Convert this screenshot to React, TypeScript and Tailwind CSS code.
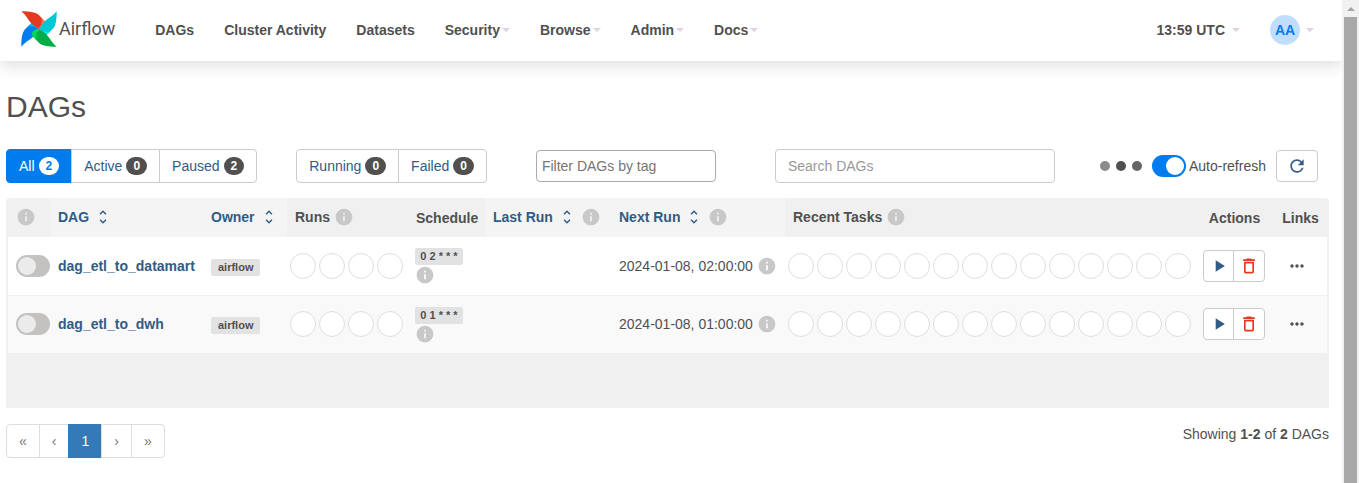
import React from "react";
import {
  MdDeleteOutline,
  MdInfo,
  MdMoreHoriz,
  MdPlayArrow,
  MdRefresh,
  MdUnfoldMore,
} from "react-icons/md";

type NavLink = { label: string; menu?: boolean };

const navLinks: NavLink[] = [
  { label: "DAGs" },
  { label: "Cluster Activity" },
  { label: "Datasets" },
  { label: "Security", menu: true },
  { label: "Browse", menu: true },
  { label: "Admin", menu: true },
  { label: "Docs", menu: true },
];

const dags = [
  { id: "dag_etl_to_datamart", owner: "airflow", schedule: "0 2 * * *", next: "2024-01-08, 02:00:00" },
  { id: "dag_etl_to_dwh", owner: "airflow", schedule: "0 1 * * *", next: "2024-01-08, 01:00:00" },
];

function Pinwheel() {
  const blade = "M0.5 59.5C0.5 45 2 34 8 29L18 19.5C20 19 22 22 24 26C26 29 29 29 30 30.5C25 37 22 42 18 45C13 49 7 52 0.5 59.5Z";
  const fold = "M11 26L18 19.5C21 17.500 25 18 27 21C29 24 30 27 30 30.500C26 27 20 24 11 26Z";
  const blades = [
    { turn: "rotate(0 30 30)", dark: "#017cee", light: "#0cb6ff" },
    { turn: "rotate(90 30 30)", dark: "#e43921", light: "#ff7557" },
    { turn: "rotate(180 30 30)", dark: "#00c7d4", light: "#11e1ee" },
    { turn: "rotate(270 30 30)", dark: "#00ad46", light: "#04d659" },
  ];
  return (
    <svg viewBox="0 0 60 60" className="size-9" aria-hidden="true">
      {blades.map((b) => (
        <g key={b.turn} transform={b.turn}>
          <path d={blade} fill={b.dark} />
          <path d={fold} fill={b.light} />
        </g>
      ))}
    </svg>
  );
}

function Caret() {
  return (
    <svg viewBox="0 0 8 4" className="h-1 w-2" aria-hidden="true">
      <path d="M0 0h8L4 4z" fill="#e2d2e2" />
    </svg>
  );
}

function Info() {
  return <MdInfo className="size-5 shrink-0 text-[#c8c8c8]" aria-hidden="true" />;
}

function CountBadge({ active, children }: { active?: boolean; children: React.ReactNode }) {
  return (
    <span
      className={
        active
          ? "rounded-full bg-white px-[7px] text-xs leading-[18px] font-bold text-[#017cee]"
          : "rounded-full bg-[#51504f] px-[7px] text-xs leading-[18px] font-bold text-white"
      }
    >
      {children}
    </span>
  );
}

function FilterGroup({ items }: { items: { label: string; count: number; active?: boolean }[] }) {
  return (
    <div className="flex">
      {items.map((i) => (
        <a
          key={i.label}
          href="#"
          className={
            i.active
              ? "-ml-px flex h-[34px] items-center gap-1 border border-[#017cee] bg-[#017cee] px-3 text-white first:ml-0 first:rounded-l last:rounded-r"
              : "-ml-px flex h-[34px] items-center gap-1 border border-[#cbcbcb] bg-white px-3 text-[#305c86] first:ml-0 first:rounded-l last:rounded-r"
          }
        >
          {i.label}
          <CountBadge active={i.active}>{i.count}</CountBadge>
        </a>
      ))}
    </div>
  );
}

function Switch({ label, checked }: { label: string; checked?: boolean }) {
  return (
    <input
      type="checkbox"
      role="switch"
      aria-label={label}
      defaultChecked={checked}
      className="block h-[22px] w-[34px] shrink-0 appearance-none rounded-full bg-[#c3c2c0] p-0.5 before:block before:size-[18px] before:rounded-full before:bg-[#ebebeb] checked:bg-[#017cee] checked:before:ml-3 checked:before:bg-white"
    />
  );
}

function Circles({ count }: { count: number }) {
  return (
    <div className="flex gap-[3px]">
      {Array.from({ length: count }, (_, i) => (
        <span key={i} className="size-[26px] shrink-0 rounded-full border border-[#dedede] bg-white" />
      ))}
    </div>
  );
}

function SortHead({ label, info }: { label: string; info?: boolean }) {
  return (
    <th className="bg-[#f4f4f4] px-2 pb-0.5 text-left">
      <div className="flex items-center gap-[5px]">
        <a href="#" className="flex items-center gap-[5px] whitespace-nowrap text-[#305c86]">
          {label}
          <MdUnfoldMore className="size-[18px]" aria-hidden="true" />
        </a>
        {info && <Info />}
      </div>
    </th>
  );
}

function NavBar() {
  return (
    <nav className="flex h-[61px] items-center bg-white pb-px pl-[21px] font-bold shadow-[0_4px_16px_rgba(0,0,0,0.14)]">
      <a href="#" className="flex items-center gap-0.5 pb-[3px]">
        <Pinwheel />
        <span className="font-[Roboto,sans-serif] text-lg font-normal">Airflow</span>
      </a>
      <ul className="ml-10 flex items-center gap-[30px]">
        {navLinks.map((l) => (
          <li key={l.label}>
            <a href="#" className="flex items-center gap-0.5 whitespace-nowrap">
              {l.label}
              {l.menu && <Caret />}
            </a>
          </li>
        ))}
      </ul>
      <div className="mr-7 ml-auto flex items-center gap-[30px]">
        <a href="#" className="flex items-center gap-[7px] whitespace-nowrap">
          13:59 UTC
          <Caret />
        </a>
        <a href="#" className="flex items-center gap-1.5">
          <span className="flex size-[30px] items-center justify-center rounded-full bg-[#c0defb] text-[#017cee]">
            AA
          </span>
          <Caret />
        </a>
      </div>
    </nav>
  );
}

function Toolbar() {
  return (
    <div className="flex items-center">
      <FilterGroup
        items={[
          { label: "All", count: 2, active: true },
          { label: "Active", count: 0 },
          { label: "Paused", count: 2 },
        ]}
      />
      <div className="ml-[39px]">
        <FilterGroup items={[{ label: "Running", count: 0 }, { label: "Failed", count: 0 }]} />
      </div>
      <input
        aria-label="Filter DAGs by tag"
        placeholder="Filter DAGs by tag"
        className="ml-[49px] h-8 w-[180px] rounded border border-[#aaaaaa] bg-white px-[5px] placeholder:text-[#757575]"
      />
      <input
        type="search"
        aria-label="Search DAGs"
        placeholder="Search DAGs"
        className="ml-[59px] h-[34px] w-[280px] rounded border border-[#cccccc] bg-white px-3 placeholder:text-[#999999]"
      />
      <div className="mr-[11px] ml-auto flex items-center">
        <div className="mr-2.5 flex gap-1.5">
          <span className="size-2.5 rounded-full bg-[#8b8b8a]" />
          <span className="size-2.5 rounded-full bg-[#51504f]" />
          <span className="size-2.5 rounded-full bg-[#666564]" />
        </div>
        <label className="mr-2.5 flex items-center gap-[3px] whitespace-nowrap">
          <Switch label="Auto-refresh" checked />
          Auto-refresh
        </label>
        <button
          type="button"
          aria-label="Refresh"
          className="flex h-8 w-[42px] items-center justify-center rounded-sm border border-[#cbcbcb] bg-white text-[#305c86]"
        >
          <MdRefresh className="size-5" />
        </button>
      </div>
    </div>
  );
}

function DagTable() {
  return (
    <div className="mt-[15px] rounded-t-sm border-2 border-t-0 border-[#f0f0f0] bg-[#f0f0f0] pb-[53px]">
      <table className="w-full table-fixed border-collapse">
        <colgroup>
          <col className="w-[42px]" />
          <col className="w-[153px]" />
          <col className="w-[84px]" />
          <col className="w-[121px]" />
          <col className="w-[77px]" />
          <col className="w-[126px]" />
          <col className="w-[174px]" />
          <col />
          <col className="w-[79px]" />
          <col className="w-[53px]" />
        </colgroup>
        <thead>
          <tr className="h-[39px]">
            <th className="px-2 pb-0.5">
              <Info />
            </th>
            <SortHead label="DAG" />
            <SortHead label="Owner" />
            <th className="px-2 pb-0.5">
              <div className="flex items-center gap-1">
                Runs
                <Info />
              </div>
            </th>
            <th className="px-2 text-left">Schedule</th>
            <SortHead label="Last Run" info />
            <SortHead label="Next Run" info />
            <th className="px-2 pb-0.5">
              <div className="flex items-center gap-1">
                Recent Tasks
                <Info />
              </div>
            </th>
            <th>Actions</th>
            <th>Links</th>
          </tr>
        </thead>
        <tbody>
          {dags.map((d) => (
            <tr key={d.id} className="h-[58px] border-b border-[#f0f0f0] bg-white last:border-b-0 even:bg-[#f9f9f9]">
              <td className="pl-2">
                <Switch label={`Enable ${d.id}`} />
              </td>
              <td className="px-2">
                <a href="#" className="font-bold whitespace-nowrap text-[#305c86]">
                  {d.id}
                </a>
              </td>
              <td className="px-2">
                <a href="#" className="inline-block rounded-xs bg-[#e2e2e2] px-[7px] text-[11px] leading-[17px] font-bold">
                  {d.owner}
                </a>
              </td>
              <td className="pl-[3px]">
                <Circles count={4} />
              </td>
              <td className="px-[7px] pt-0.5">
                <a
                  href="#"
                  className="block w-12 rounded-xs bg-[#e2e2e2] text-center text-[11px] leading-[17px] font-bold whitespace-nowrap"
                >
                  {d.schedule}
                </a>
                <Info />
              </td>
              <td />
              <td className="px-2">
                <div className="flex items-center gap-1 whitespace-nowrap">
                  <time>{d.next}</time>
                  <Info />
                </div>
              </td>
              <td className="pl-[3px]">
                <Circles count={14} />
              </td>
              <td className="pl-2">
                <div className="flex">
                  <button
                    type="button"
                    aria-label={`Trigger ${d.id}`}
                    className="flex h-8 w-[31px] items-center justify-center rounded-l-sm border border-[#cbcbcb] bg-white text-[#305c86]"
                  >
                    <MdPlayArrow className="size-5" />
                  </button>
                  <button
                    type="button"
                    aria-label={`Delete ${d.id}`}
                    className="-ml-px flex h-8 w-8 items-center justify-center rounded-r-sm border border-[#cbcbcb] bg-white text-[#e43921]"
                  >
                    <MdDeleteOutline className="size-5" />
                  </button>
                </div>
              </td>
              <td className="pr-2">
                <a href="#" aria-label={`Links for ${d.id}`} className="flex justify-center">
                  <MdMoreHoriz className="size-5" />
                </a>
              </td>
            </tr>
          ))}
        </tbody>
      </table>
    </div>
  );
}

function PageFooter() {
  const link =
    "-ml-px flex h-[34px] items-center border border-[#dddddd] bg-white px-3 text-[#777777] first:ml-0 first:rounded-l last:rounded-r";
  return (
    <div className="mt-4 flex justify-between">
      <nav className="flex" aria-label="Pages">
        <a href="#" className={link}>«</a>
        <a href="#" className={link}>‹</a>
        <a href="#" aria-current="page" className="-ml-px flex h-[34px] items-center border border-[#337ab7] bg-[#337ab7] px-3 text-white">
          1
        </a>
        <a href="#" className={link}>›</a>
        <a href="#" className={link}>»</a>
      </nav>
      <p>
        Showing <strong>1-2</strong> of <strong>2</strong> DAGs
      </p>
    </div>
  );
}

export default function App() {
  return (
    <div className="flex min-h-screen bg-white font-['Liberation_Sans',Arial,sans-serif] text-sm text-[#51504f]">
      <div className="min-w-0 grow overflow-hidden">
        <NavBar />
        <main className="pr-[13px] pl-1.5">
          <h1 className="pt-7 pb-6 text-3xl">DAGs</h1>
          <Toolbar />
          <DagTable />
          <PageFooter />
        </main>
      </div>
      <div className="flex w-[17px] shrink-0 flex-col items-center bg-[#f1f1f1]" aria-hidden="true">
        <div className="flex h-[17px] shrink-0 items-center">
          <svg viewBox="0 0 8 4" className="h-1 w-2">
            <path d="M0 4h8L4 0z" fill="#a3a3a3" />
          </svg>
        </div>
        <div className="w-[13px] grow bg-[#a8a8a8]" />
      </div>
    </div>
  );
}
